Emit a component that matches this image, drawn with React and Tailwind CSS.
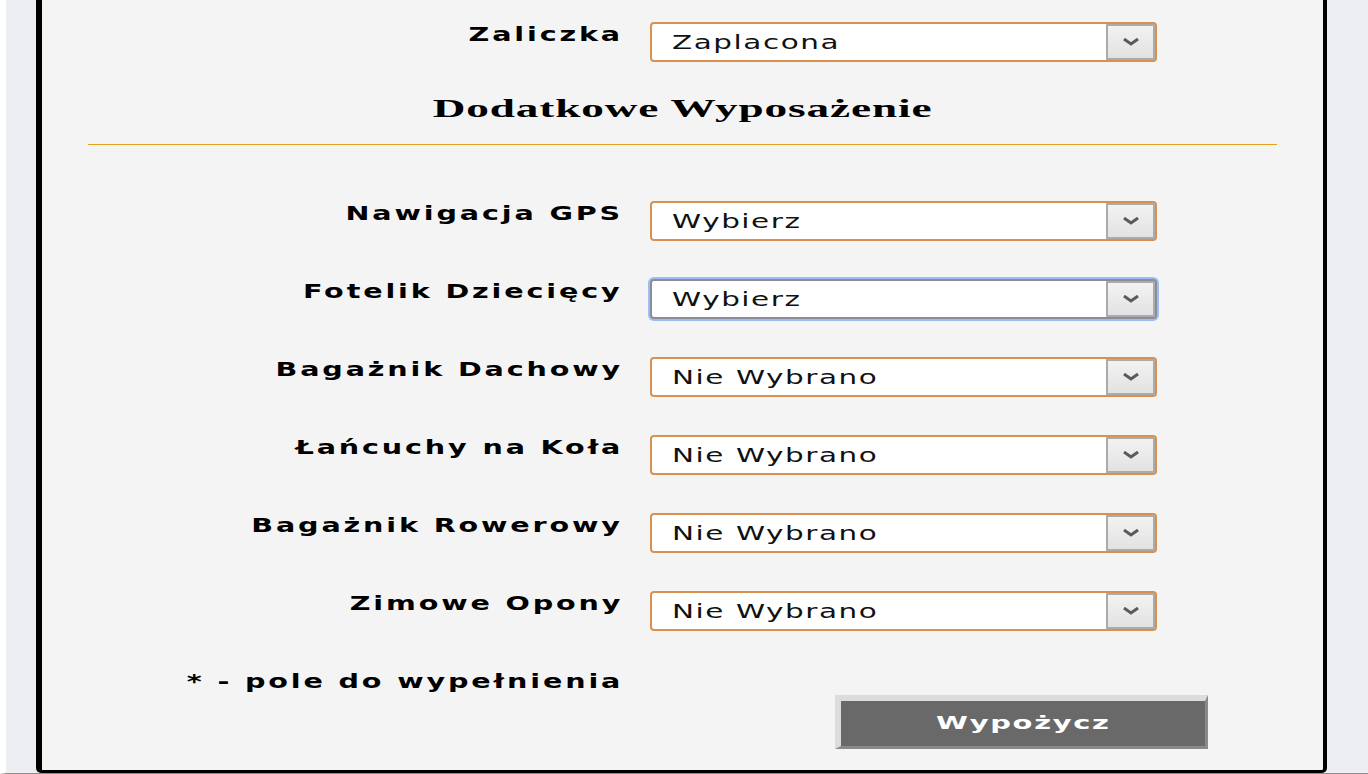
import React from 'react';

const rows = [
  { label: 'Nawigacja GPS', value: 'Wybierz' },
  { label: 'Fotelik Dziecięcy', value: 'Wybierz', focused: true },
  { label: 'Bagażnik Dachowy', value: 'Nie Wybrano' },
  { label: 'Łańcuchy na Koła', value: 'Nie Wybrano' },
  { label: 'Bagażnik Rowerowy', value: 'Nie Wybrano' },
  { label: 'Zimowe Opony', value: 'Nie Wybrano' },
];

const Chevron = () => (
  <svg width="16" height="8" viewBox="0 0 16 8">
    <polyline points="1,1 8,6 15,1" fill="none" stroke="#5a5a5a" strokeWidth="3" />
  </svg>
);

const Select = ({ value, focused }) => (
  <div
    className={`w-[507px] h-[40px] flex items-stretch bg-white rounded-[4px] border-2 ${
      focused ? 'border-[#8c8c96] ring-2 ring-[#9dbcf3]' : 'border-[#d8914f]'
    }`}
  >
    <div className="flex-1 flex items-center pl-[20px] overflow-visible">
      <span className="inline-block origin-left scale-x-[1.55] text-[19px] tracking-[1px] text-[#111] font-['DejaVu_Sans',sans-serif] leading-none whitespace-nowrap">
        {value}
      </span>
    </div>
    <div className="w-[49px] border-2 border-[#ababab] bg-gradient-to-b from-[#f2f2f2] to-[#e2e2e2] flex items-center justify-center">
      <Chevron />
    </div>
  </div>
);

const Label = ({ children }) => (
  <div className="w-[581px] text-right h-[24px] leading-[24px] whitespace-nowrap">
    <span className="inline-block origin-right scale-x-[1.43] text-[20px] tracking-[2px] font-bold text-black font-['DejaVu_Sans',sans-serif]">
      {children}
    </span>
  </div>
);

const Row = ({ label, children }) => (
  <div className="flex items-start">
    <Label>{label}</Label>
    <div className="ml-[27px]">{children}</div>
  </div>
);

export default function App() {
  return (
    <div className="w-[1368px] h-[774px] bg-[#eceef2] border-l-[6px] border-l-white border-b border-b-[#8f8f8f] pl-[30px] overflow-hidden">
      <div className="w-[1291px] h-[773px] bg-[#f4f4f4] border-l-[6px] border-r-4 border-b-[3px] border-black rounded-b-[5px] pt-[22px]">
        <Row label="Zaliczka">
          <Select value="Zaplacona" />
        </Row>

        <div className="mt-[34px] h-[26px] flex justify-center">
          <span className="inline-block origin-center scale-x-[1.74] text-[26px] leading-[26px] tracking-[0.5px] font-bold text-black font-['Liberation_Serif',serif] whitespace-nowrap">
            Dodatkowe Wyposażenie
          </span>
        </div>

        <div className="mt-[22px] mx-[46px] h-px bg-[#e4a21c]" />

        <div className="mt-[56px] flex flex-col gap-[38px]">
          {rows.map((row, i) => (
            <Row key={i} label={row.label}>
              <Select value={row.value} focused={row.focused} />
            </Row>
          ))}
        </div>

        <div className="mt-[38px]">
          <Label>* - pole do wypełnienia</Label>
        </div>

        <div className="mt-[2px] ml-[793px] w-[373px] h-[54px] bg-[#696969] border-l-[6px] border-t-[6px] border-r-[3px] border-b-[3px] border-l-[#dcdcdc] border-t-[#dcdcdc] border-r-[#8a8a8a] border-b-[#8a8a8a] flex items-center justify-center">
          <span className="inline-block origin-center scale-x-[1.7] text-[17px] tracking-[1px] font-bold text-white font-['DejaVu_Sans',sans-serif] leading-none">
            Wypożycz
          </span>
        </div>
      </div>
    </div>
  );
}
